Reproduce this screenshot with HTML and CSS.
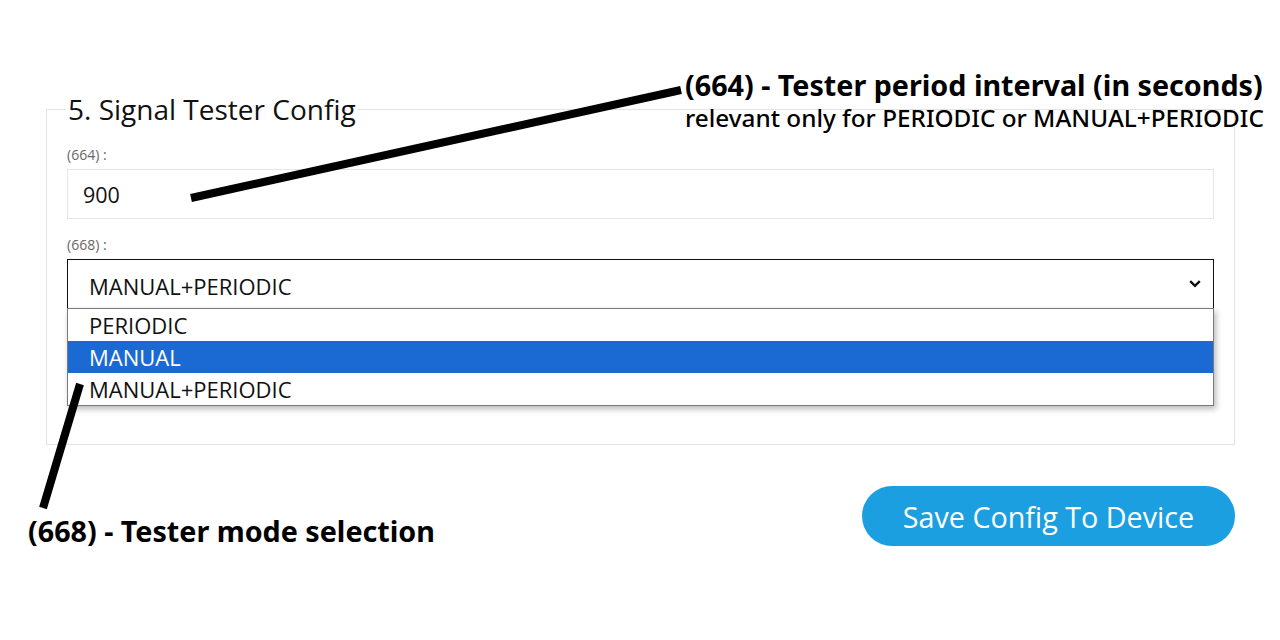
FILE: index.html
```html
<!DOCTYPE html>
<html lang="en">
<head>
<meta charset="utf-8">
<title>Signal Tester Config</title>
<link rel="stylesheet" href="styles.css">
</head>
<body>
<div class="page">
  <fieldset class="card">
    <legend class="card-title">5. Signal Tester Config</legend>
    <div class="field-label">(664) :</div>
    <div class="text-input">900</div>
    <div class="field-label field-label--second">(668) :</div>
    <div class="select-wrap">
      <div class="select">
        <span>MANUAL+PERIODIC</span>
        <svg class="chevron" width="12" height="8" viewBox="0 0 12 8"><path d="M1.2 1.2 L6 5.8 L10.8 1.2" fill="none" stroke="#111" stroke-width="2.4"/></svg>
      </div>
      <ul class="dropdown">
        <li class="option">PERIODIC</li>
        <li class="option option--active">MANUAL</li>
        <li class="option">MANUAL+PERIODIC</li>
      </ul>
    </div>
  </fieldset>
  <div class="actions">
    <button class="save-btn">Save Config To Device</button>
  </div>

  <svg class="pointers" width="1280" height="640" viewBox="0 0 1280 640">
    <line x1="191" y1="198" x2="681" y2="90" stroke="#000" stroke-width="8"/>
    <line x1="80" y1="384" x2="43" y2="508" stroke="#000" stroke-width="8"/>
  </svg>
  <div class="note note--top">
    <div class="note-title">(664) - Tester period interval (in seconds)</div>
    <div class="note-sub">relevant only for PERIODIC or MANUAL+PERIODIC</div>
  </div>
  <div class="note note--bottom">
    <div class="note-title">(668) - Tester mode selection</div>
  </div>
</div>
</body>
</html>
```
FILE: styles.css
```css
* { box-sizing: border-box; }
html, body { margin: 0; padding: 0; background: #fff; }
body {
  font-family: "Open Sans", "Noto Sans", sans-serif;
  color: #111;
  width: 1280px;
  height: 640px;
  overflow: hidden;
}
.page {
  position: relative;
  width: 1280px;
  height: 640px;
  padding: 91px 46px 0 46px;
}
.card {
  margin: 0;
  width: 1189px;
  border: 1px solid #e4e4e4;
  padding: 0 20px 135px 20px;
}
.card-title {
  padding: 0 2px;
  margin-left: -1px;
  font-size: 28px;
  line-height: 36px;
  font-weight: 400;
  color: #111;
}
.field-label {
  font-size: 14px;
  line-height: 18px;
  color: #6b6664;
  margin-top: 19px;
  margin-bottom: 5px;
}
.field-label--second { margin-top: 17px; margin-bottom: 5px; }
.text-input {
  height: 50px;
  border: 1px solid #e6e6e6;
  padding: 0 15px;
  font-size: 21.5px;
  line-height: 50px;
  color: #111;
}
.select-wrap { position: relative; }
.select {
  height: 50px;
  border: 1px solid #111;
  padding: 0 12px 0 21px;
  font-size: 22px;
  display: flex;
  align-items: center;
  justify-content: space-between;
  padding-top: 4px;
}
.chevron { margin-top: -4px; }
.dropdown {
  position: absolute;
  left: 0;
  right: 0;
  top: 49px;
  margin: 0;
  padding: 0;
  list-style: none;
  background: #fff;
  border: 1px solid #7a7a7a;
  box-shadow: 2px 3px 6px rgba(0, 0, 0, 0.28);
}
.option {
  height: 32px;
  line-height: 33px;
  padding-left: 21px;
  font-size: 22px;
  color: #111;
}
.option--active { background: #1b69d3; color: #fff; }
.actions {
  width: 1189px;
  display: flex;
  justify-content: flex-end;
  margin-top: 41px;
}
.save-btn {
  width: 373px;
  height: 60px;
  border: none;
  border-radius: 30px;
  background: #1c9fe0;
  color: #fff;
  font-family: "Open Sans", "Noto Sans", sans-serif;
  font-size: 28.7px;
  padding: 0;
}
.pointers {
  position: absolute;
  left: 0;
  top: 0;
  pointer-events: none;
}
.note {
  position: absolute;
  font-family: "Noto Sans", "Open Sans", sans-serif;
  color: #000;
}
.note--top { left: 685px; top: 66px; }
.note--bottom { left: 28px; top: 512px; }
.note-title {
  font-size: 28.7px;
  font-weight: 700;
  line-height: 38px;
}
.note-sub {
  font-size: 24.3px;
  font-weight: 500;
  line-height: 28px;
}
```
